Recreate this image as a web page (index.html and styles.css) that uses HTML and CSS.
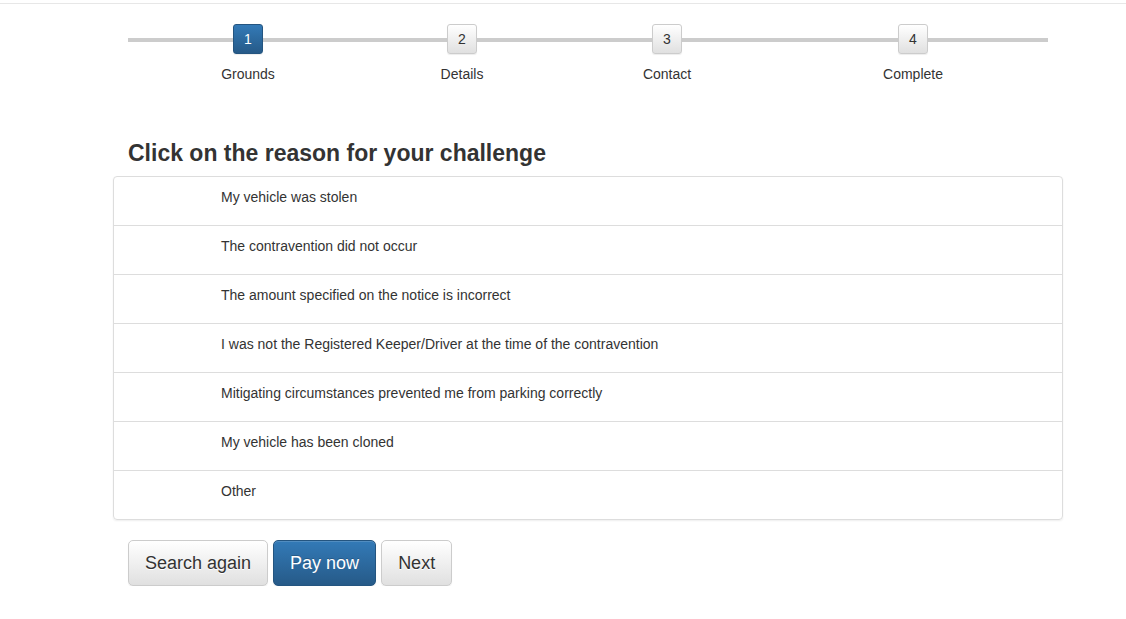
FILE: index.html
```html
<!DOCTYPE html>
<html lang="en">
<head>
    <meta charset="UTF-8">
    <meta name="viewport" content="width=device-width, initial-scale=1.0">
    <title>Challenge a notice</title>
    <link rel="stylesheet" href="styles.css">
</head>
<body>
    <div class="top-bar"></div>

    <div class="container">
        <!-- steps -->
        <div class="stepper">
            <div class="step">
                <span class="step-box active">1</span>
                <span class="step-label">Grounds</span>
            </div>
            <div class="step">
                <span class="step-box">2</span>
                <span class="step-label">Details</span>
            </div>
            <div class="step">
                <span class="step-box">3</span>
                <span class="step-label">Contact</span>
            </div>
            <div class="step">
                <span class="step-box">4</span>
                <span class="step-label">Complete</span>
            </div>
        </div>

        <h3 class="title">Click on the reason for your challenge</h3>

        <ul class="reasons">
            <li class="reason">My vehicle was stolen</li>
            <li class="reason">The contravention did not occur</li>
            <li class="reason">The amount specified on the notice is incorrect</li>
            <li class="reason">I was not the Registered Keeper/Driver at the time of the contravention</li>
            <li class="reason">Mitigating circumstances prevented me from parking correctly</li>
            <li class="reason">My vehicle has been cloned</li>
            <li class="reason">Other</li>
        </ul>

        <div class="actions">
            <button class="btn">Search again</button>
            <button class="btn btn-primary">Pay now</button>
            <button class="btn">Next</button>
        </div>
    </div>
</body>
</html>
```

FILE: styles.css
```css
/* page */
body {
    margin: 0;
    font-family: "Liberation Sans", Arial, sans-serif;
    font-size: 14px;
    line-height: 20px;
    color: #333;
    background: #fff;
}

.top-bar {
    height: 3px;
    border-bottom: 1px solid #e7e7e7;
}

.container {
    width: 920px;
    margin-left: 128px;
}

/* steps */
.stepper {
    position: relative;
    display: grid;
    grid-template-columns: 240px 188px 222px 270px;
    margin-top: 20px;
}

.stepper::before {
    content: "";
    position: absolute;
    left: 0;
    right: 0;
    top: 14px;
    height: 4px;
    background: #ccc;
}

.step {
    position: relative;
    display: flex;
    flex-direction: column;
    align-items: center;
}

.step-box {
    width: 28px;
    height: 28px;
    line-height: 28px;
    text-align: center;
    font-size: 14px;
    border: 1px solid #ccc;
    border-radius: 3px;
    background: linear-gradient(to bottom, #fff 0, #e0e0e0 100%);
    box-shadow: 0 1px 1px rgba(0, 0, 0, 0.075);
    color: #333;
}

.step-box.active {
    background: linear-gradient(to bottom, #337ab7 0, #265a88 100%);
    border-color: #245580;
    color: #fff;
}

.step-label {
    margin-top: 10px;
}

/* heading */
.title {
    margin: 56px 0 10px;
    font-size: 23px;
    font-weight: bold;
    line-height: 26px;
    color: #333;
}

/* list of reasons */
.reasons {
    list-style: none;
    margin: 0 -15px;
    padding: 0;
    border: 1px solid #ddd;
    border-radius: 4px;
    box-shadow: 0 1px 2px rgba(0, 0, 0, 0.07);
}

.reason {
    padding: 10px 15px 18px 107px;
    border-top: 1px solid #ddd;
    cursor: pointer;
}

.reason:first-child {
    border-top: none;
}

.reason:hover {
    background: #f5f5f5;
}

/* buttons */
.actions {
    display: flex;
    gap: 5px;
    margin-top: 20px;
}

.btn {
    font-family: "Liberation Sans", Arial, sans-serif;
    font-size: 18px;
    line-height: 24px;
    padding: 10px 16px;
    border: 1px solid #ccc;
    border-radius: 5px;
    color: #333;
    background: linear-gradient(to bottom, #fff 0, #e0e0e0 100%);
    text-shadow: 0 1px 0 #fff;
    box-shadow: inset 0 1px 0 rgba(255, 255, 255, 0.15), 0 1px 1px rgba(0, 0, 0, 0.075);
    cursor: pointer;
}

.btn-primary {
    color: #fff;
    border-color: #245580;
    background: linear-gradient(to bottom, #337ab7 0, #265a88 100%);
    text-shadow: 0 -1px 0 rgba(0, 0, 0, 0.2);
}
```
